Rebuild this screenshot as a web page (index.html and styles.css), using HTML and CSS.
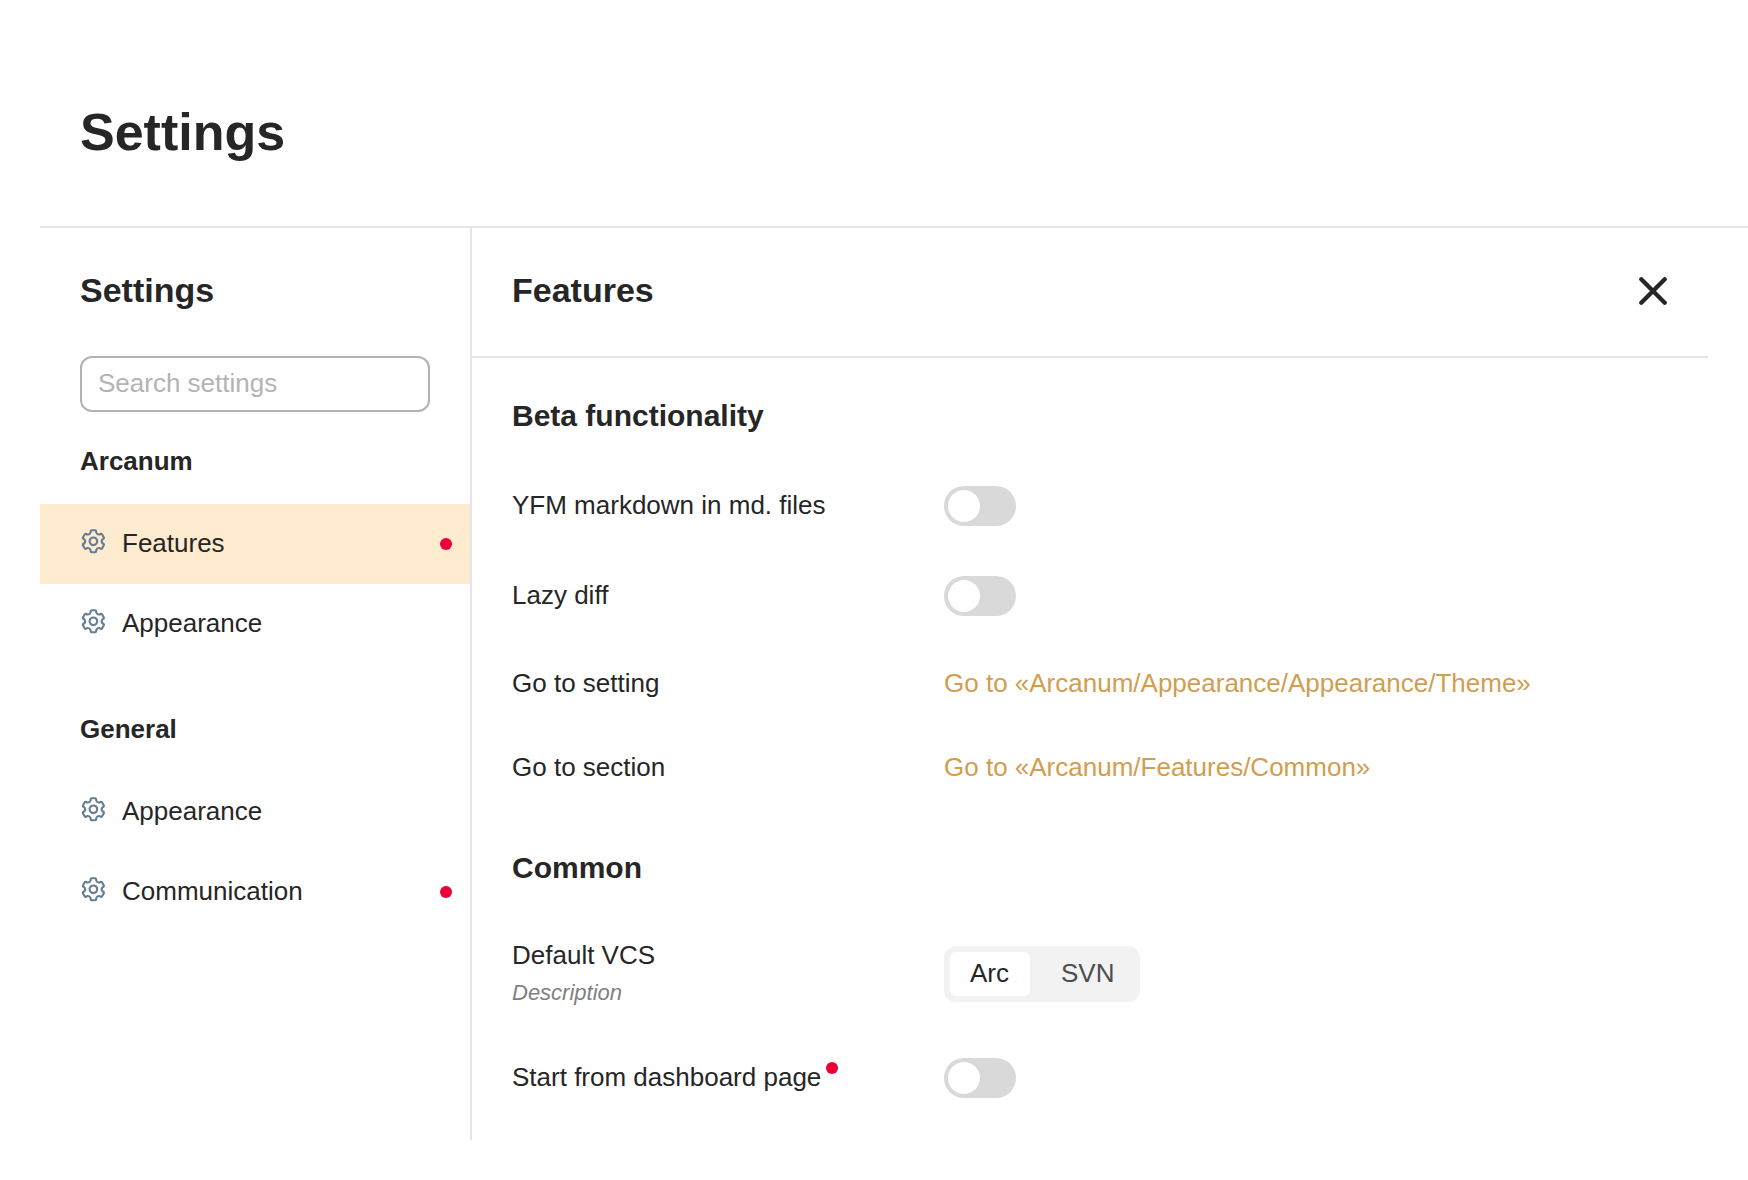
FILE: index.html
```html
<!DOCTYPE html>
<html lang="en">
<head>
<meta charset="utf-8">
<title>Settings</title>
<link rel="stylesheet" href="styles.css">
</head>
<body>
<svg class="sprite" aria-hidden="true">
  <symbol id="gear" viewBox="-13.4 -13.3 26 26">
    <path d="M-2.8 -8.8V-9.8Q-2.8 -11 -1.6 -11H1.6Q2.8 -11 2.8 -9.8V-8.8Q3.7 -6.41 6.22 -6.82L7.09 -7.32Q8.13 -7.92 8.73 -6.89L10.33 -4.11Q10.93 -3.08 9.89 -2.48L9.02 -1.98Q7.4 0 9.02 1.98L9.89 2.48Q10.93 3.08 10.33 4.11L8.73 6.89Q8.13 7.92 7.09 7.32L6.22 6.82Q3.7 6.41 2.8 8.8V9.8Q2.8 11 1.6 11H-1.6Q-2.8 11 -2.8 9.8V8.8Q-3.7 6.41 -6.22 6.82L-7.09 7.32Q-8.13 7.92 -8.73 6.89L-10.33 4.11Q-10.93 3.08 -9.89 2.48L-9.02 1.98Q-7.4 0 -9.02 -1.98L-9.89 -2.48Q-10.93 -3.08 -10.33 -4.11L-8.73 -6.89Q-8.13 -7.92 -7.09 -7.32L-6.22 -6.82Q-3.7 -6.41 -2.8 -8.8Z"/>
    <circle cx="0" cy="0" r="3.8"/>
  </symbol>
</svg>
<header class="page-header"><h1 class="page-title">Settings</h1></header>
<main class="settings">
  <aside class="sidebar">
    <h2 class="heading">Settings</h2>
    <input class="search" type="text" placeholder="Search settings">
    <nav class="menu">
      <section class="group">
        <h3 class="group-title">Arcanum</h3>
        <a class="item item-active"><svg class="gear"><use href="#gear"/></svg><span class="item-text">Features</span><i class="dot"></i></a>
        <a class="item"><svg class="gear"><use href="#gear"/></svg><span class="item-text">Appearance</span></a>
      </section>
      <section class="group">
        <h3 class="group-title">General</h3>
        <a class="item"><svg class="gear"><use href="#gear"/></svg><span class="item-text">Appearance</span></a>
        <a class="item"><svg class="gear"><use href="#gear"/></svg><span class="item-text">Communication</span><i class="dot"></i></a>
      </section>
    </nav>
  </aside>
  <div class="content">
    <div class="content-header">
      <h2 class="heading">Features</h2>
      <svg class="close" viewBox="0 0 28 28"><path d="M2.3 2.3L25.7 25.7M25.7 2.3L2.3 25.7"/></svg>
    </div>
    <section class="section">
      <h3 class="section-title">Beta functionality</h3>
      <div class="row"><span class="label label-toggle">YFM markdown in md. files</span><span class="toggle"></span></div>
      <div class="row"><span class="label label-toggle">Lazy diff</span><span class="toggle"></span></div>
      <div class="row"><span class="label">Go to setting</span><a class="link">Go to «Arcanum/Appearance/Appearance/Theme»</a></div>
      <div class="row"><span class="label">Go to section</span><a class="link">Go to «Arcanum/Features/Common»</a></div>
    </section>
    <section class="section">
      <h3 class="section-title">Common</h3>
      <div class="row">
        <div class="label">Default VCS<div class="description">Description</div></div>
        <div class="segmented"><span class="option option-active">Arc</span><span class="option">SVN</span></div>
      </div>
      <div class="row"><span class="label label-toggle"><span class="marked">Start from dashboard page<i class="dot badge"></i></span></span><span class="toggle"></span></div>
    </section>
  </div>
</main>
</body>
</html>
```

FILE: styles.css
```css
* { box-sizing: border-box; }

body {
  margin: 0;
  background: #fff;
  color: #262626;
  font: 26px/34px "Liberation Sans", Arial, sans-serif;
  overflow: hidden;
}

h1, h2, h3 { margin: 0; font-weight: bold; }
.sprite { display: none; }

.page-header {
  height: 228px;
  margin-left: 40px;
  padding: 102px 40px 0;
  border-bottom: 2px solid #e5e5e5;
}
.page-title { font-size: 52px; line-height: 60px; }

.settings { display: flex; height: 912px; margin: 0 40px; }
.heading { font-size: 34px; line-height: 44px; }

.sidebar {
  flex: none;
  width: 432px;
  padding-top: 40px;
  border-right: 2px solid #e5e5e5;
}
.sidebar .heading { padding-left: 40px; }

.search {
  display: block;
  width: 350px;
  height: 56px;
  margin: 44px 0 0 40px;
  padding: 0 16px 2px;
  border: 2px solid #b2b2b2;
  border-radius: 12px;
  background: #fff;
  font: inherit;
}
.search::placeholder { color: #b3b3b3; opacity: 1; }

.menu { display: flex; flex-direction: column; gap: 48px; padding-top: 32px; }
.group-title { height: 60px; padding-left: 40px; font-size: 26px; line-height: 34px; }

.item {
  display: flex;
  align-items: center;
  height: 80px;
  padding: 0 18px 0 40px;
}
.item-active { background: #ffebcf; }
.item-text { flex: 1; padding-bottom: 2px; }

.gear {
  width: 26px;
  height: 26px;
  margin: 0 16px 6px 0;
  fill: none;
  stroke: #657d94;
  stroke-width: 2.1;
  stroke-linejoin: round;
}

.dot { width: 12px; height: 12px; border-radius: 50%; background: #eb0037; }

.content { flex: 1; }
.content-header {
  display: flex;
  justify-content: space-between;
  height: 130px;
  padding: 40px 41px 0 40px;
  border-bottom: 2px solid #e5e5e5;
}
.close {
  width: 28px;
  height: 28px;
  margin-top: 9px;
  fill: none;
  stroke: #262626;
  stroke-width: 4.3;
  stroke-linecap: round;
}

.section {
  display: flex;
  flex-direction: column;
  gap: 50px;
  padding: 38px 40px 0;
}
.section + .section { padding-top: 64px; }
.section-title { font-size: 30px; line-height: 40px; }

.row { display: flex; align-items: center; }
.label { width: 432px; }
.label-toggle { padding-bottom: 2px; }
.toggle {
  width: 72px;
  height: 40px;
  padding: 4px;
  border-radius: 20px;
  background: #d9d9d9;
}
.toggle::before {
  content: "";
  display: block;
  width: 32px;
  height: 32px;
  border-radius: 50%;
  background: #fff;
}
.link { color: #d19e4f; }

.description {
  padding-top: 6px;
  color: #808080;
  font-size: 22px;
  font-style: italic;
  line-height: 30px;
}

.segmented {
  display: flex;
  height: 56px;
  margin-top: 2px;
  padding: 6px;
  border-radius: 12px;
  background: #f2f2f2;
}
.option {
  padding: 4px 20px 0;
  border-radius: 6px;
  color: #4d4d4d;
}
.option-active { width: 80px; margin-right: 11px; background: #fff; color: #262626; }

.marked { position: relative; }
.badge { position: absolute; top: 0; right: -17px; }
```
